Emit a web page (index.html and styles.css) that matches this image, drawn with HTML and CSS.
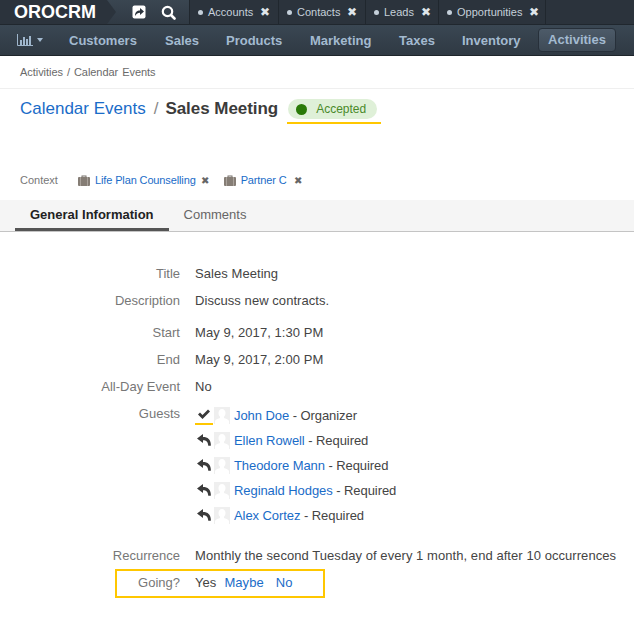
FILE: index.html
```html
<!DOCTYPE html>
<html lang="en">
<head>
    <meta charset="UTF-8">
    <title>Sales Meeting - Calendar Events</title>
    <link rel="stylesheet" href="styles.css">
</head>
<body>
    <svg class="icon-defs" width="0" height="0">
        <symbol id="icon-avatar" viewBox="0 0 16 17">
            <rect width="16" height="17" fill="#efefef"/>
            <path d="M8 2C10.200 2 11.500 3.800 11.500 6C11.500 7.800 10.800 9 10 9.800V11C11.500 11.800 14 12 15 14V17H1V14C2 12 4.500 11.800 6 11V9.800C5.200 9 4.500 7.800 4.500 6C4.500 3.800 5.800 2 8 2Z" fill="#fff"/>
        </symbol>
        <symbol id="icon-reply" viewBox="0 0 14 12">
            <path d="M6 0 L0 4.500 L6 9 V6.200 C9.300 6.200 11 7.800 11.300 11.800 L13.800 11.800 C14.200 6 11 3 6 3Z" fill="#3a3a3a"/>
        </symbol>
        <symbol id="icon-bag" viewBox="0 0 12 11">
            <path d="M3.500 2.500V0.500h5V2.500h-1V1.500h-3V2.500z" fill="#77716b"/>
            <rect y="2" width="12" height="9" rx="1" fill="#857d75"/>
            <path d="M2.500 2v9M9.500 2v9" stroke="#aaa39c"/>
        </symbol>
    </svg>

    <header class="app-header">
        <div class="top-bar">
            <div class="logo">OROCRM</div>
            <div class="quick-tools">
                <svg class="tool-icon" width="14" height="14" viewBox="0 0 14 14">
                    <rect width="13" height="13" x="0.500" y="0.500" rx="2" fill="#fff"/>
                    <path d="M3 11 C3 7 5 5.500 8 5.500 V3 L12 6.500 L8 10 V7.700 C6 7.700 4.500 8.500 3 11Z" fill="#2b343d"/>
                </svg>
                <svg class="tool-icon" width="15" height="15" viewBox="0 0 15 15">
                    <circle cx="6.500" cy="6.500" r="4.700" fill="none" stroke="#fff" stroke-width="2.200"/>
                    <path d="M10 10 L13.500 13.500" stroke="#fff" stroke-width="2.600" stroke-linecap="round"/>
                </svg>
            </div>
            <ul class="pins">
                <li class="pin pin-accounts"><span class="pin-dot"></span>Accounts<span class="pin-x">&#10006;</span></li>
                <li class="pin pin-contacts"><span class="pin-dot"></span>Contacts<span class="pin-x">&#10006;</span></li>
                <li class="pin pin-leads"><span class="pin-dot"></span>Leads<span class="pin-x">&#10006;</span></li>
                <li class="pin pin-opps"><span class="pin-dot"></span>Opportunities<span class="pin-x">&#10006;</span></li>
            </ul>
        </div>
        <nav class="main-nav">
            <div class="nav-chart">
                <svg width="16" height="12" viewBox="0 0 16 12">
                    <path d="M0.500 0 V11.500 H16" fill="none" stroke="#9fb6cc"/>
                    <path d="M3 6h2v5H3zM6 3h2v8H6zM9 5h2v6H9zM12 2h2v9h-2z" fill="#9fb6cc"/>
                </svg>
                <span class="caret"></span>
            </div>
            <a class="nav-item nav-customers">Customers</a>
            <a class="nav-item nav-sales">Sales</a>
            <a class="nav-item nav-products">Products</a>
            <a class="nav-item nav-marketing">Marketing</a>
            <a class="nav-item nav-taxes">Taxes</a>
            <a class="nav-item nav-inventory">Inventory</a>
            <a class="nav-item nav-active">Activities</a>
        </nav>
    </header>

    <div class="breadcrumb">Activities / Calendar Events</div>

    <main class="page">
        <div class="title-row">
            <a class="title-link">Calendar Events</a>
            <span class="title-sep">/</span>
            <span class="title-name">Sales Meeting</span>
            <div class="status-wrap">
                <span class="status"><span class="status-dot"></span>Accepted</span>
            </div>
        </div>

        <div class="context">
            <span class="context-label">Context</span>
            <svg class="bag" width="12" height="11"><use href="#icon-bag"/></svg>
            <a class="context-link">Life Plan Counselling</a>
            <span class="context-x">&#10006;</span>
            <svg class="bag bag-second" width="12" height="11"><use href="#icon-bag"/></svg>
            <a class="context-link">Partner C</a>
            <span class="context-x">&#10006;</span>
        </div>

        <div class="tabs">
            <a class="tab tab-active">General Information</a>
            <a class="tab">Comments</a>
        </div>

        <dl class="details">
            <div class="row row-title"><dt>Title</dt><dd>Sales Meeting</dd></div>
            <div class="row row-desc"><dt>Description</dt><dd>Discuss new contracts.</dd></div>
            <div class="row row-start"><dt>Start</dt><dd>May 9, 2017, 1:30 PM</dd></div>
            <div class="row row-end"><dt>End</dt><dd>May 9, 2017, 2:00 PM</dd></div>
            <div class="row row-allday"><dt>All-Day Event</dt><dd>No</dd></div>
            <div class="row row-guests">
                <dt>Guests</dt>
                <dd>
                    <ul class="guests">
                        <li class="guest">
                            <span class="guest-status guest-organizer">
                                <svg width="14" height="12" viewBox="0 0 14 12"><path d="M1 6.500 L3 4.500 L5.500 7 L11 1.500 L13 3.500 L5.500 11Z" fill="#3a3a3a"/></svg>
                            </span>
                            <svg class="avatar" width="16" height="17"><use href="#icon-avatar"/></svg>
                            <span><a>John Doe</a> - Organizer</span>
                        </li>
                        <li class="guest">
                            <span class="guest-status"><svg width="14" height="12"><use href="#icon-reply"/></svg></span>
                            <svg class="avatar" width="16" height="17"><use href="#icon-avatar"/></svg>
                            <span><a>Ellen Rowell</a> - Required</span>
                        </li>
                        <li class="guest">
                            <span class="guest-status"><svg width="14" height="12"><use href="#icon-reply"/></svg></span>
                            <svg class="avatar" width="16" height="17"><use href="#icon-avatar"/></svg>
                            <span><a>Theodore Mann</a> - Required</span>
                        </li>
                        <li class="guest">
                            <span class="guest-status"><svg width="14" height="12"><use href="#icon-reply"/></svg></span>
                            <svg class="avatar" width="16" height="17"><use href="#icon-avatar"/></svg>
                            <span><a>Reginald Hodges</a> - Required</span>
                        </li>
                        <li class="guest">
                            <span class="guest-status"><svg width="14" height="12"><use href="#icon-reply"/></svg></span>
                            <svg class="avatar" width="16" height="17"><use href="#icon-avatar"/></svg>
                            <span><a>Alex Cortez</a> - Required</span>
                        </li>
                    </ul>
                </dd>
            </div>
            <div class="row row-recurrence"><dt>Recurrence</dt><dd>Monthly the second Tuesday of every 1 month, end after 10 occurrences</dd></div>
            <div class="row row-going">
                <dt>Going?</dt>
                <dd class="going"><span>Yes</span><a>Maybe</a><a>No</a></dd>
            </div>
        </dl>
    </main>
</body>
</html>
```

FILE: styles.css
```css
* {
    box-sizing: border-box;
}
body {
    font-family: "Liberation Sans", Arial, sans-serif;
    font-size: 14px;
    margin: 0;
    padding: 0;
    background-color: #fff;
    color: #444;
    overflow: hidden;
}
a {
    color: #1a6cc8;
}
.icon-defs {
    display: block;
    height: 0;
}

/* header */
.app-header {
    height: 56px;
    background-color: #2c353e;
}
.top-bar {
    display: flex;
    height: 25px;
    background-color: #2b333c;
    border-bottom: 1px solid #20272e;
}
.logo {
    width: 107px;
    padding-left: 14px;
    color: #fff;
    font-size: 18px;
    font-weight: bold;
    line-height: 24px;
    position: relative;
}
/* arrow of the logo block, lies over the tools block */
.logo::after {
    content: "";
    position: absolute;
    left: 107px;
    top: 0;
    border-left: 9px solid #2b333c;
    border-top: 12px solid transparent;
    border-bottom: 12px solid transparent;
}
.quick-tools {
    width: 82px;
    height: 24px;
    display: flex;
    align-items: center;
    gap: 15px;
    padding-left: 25px;
    background: linear-gradient(#3a4651, #303a44);
}
.pins {
    display: flex;
    list-style: none;
    margin: 0;
    padding: 0;
    font-size: 11px;
    color: #c5d0da;
}
.pin {
    display: flex;
    align-items: center;
    height: 24px;
    padding-left: 8px;
    border-left: 1px solid #20272e;
}
.pin-accounts {
    width: 89px;
}
.pin-contacts {
    width: 87px;
}
.pin-leads {
    width: 73px;
}
.pin-opps {
    width: 108px;
    border-right: 1px solid #20272e;
}
.pin-dot {
    width: 5px;
    height: 5px;
    border-radius: 50%;
    background-color: #c5d0da;
    margin-right: 5px;
}
.pin-x {
    margin-left: 7px;
    font-size: 12px;
    color: #dfe5ea;
}
.main-nav {
    display: flex;
    align-items: center;
    height: 31px;
    background: linear-gradient(#3a4753, #2f3943);
    border-bottom: 1px solid #1e252b;
    padding-left: 17px;
    font-size: 13px;
    font-weight: bold;
    color: #a3bad0;
}
.nav-chart {
    display: flex;
    align-items: center;
    width: 52px;
}
.caret {
    width: 0;
    height: 0;
    margin-left: 4px;
    border-left: 3.500px solid transparent;
    border-right: 3.500px solid transparent;
    border-top: 4px solid #a3bad0;
}
.nav-item {
    color: #a3bad0;
}
.nav-customers {
    width: 96px;
}
.nav-sales {
    width: 61px;
}
.nav-products {
    width: 84px;
}
.nav-marketing {
    width: 89px;
}
.nav-taxes {
    width: 63px;
}
.nav-inventory {
    width: 76px;
}
.nav-active {
    width: 78px;
    height: 24px;
    line-height: 22px;
    text-align: center;
    background: linear-gradient(#4d5b69, #3e4a56);
    border: 1px solid #27303a;
    border-radius: 4px;
}

/* breadcrumb and title */
.breadcrumb {
    height: 33px;
    padding: 10px 20px 0;
    border-bottom: 1px solid #efefef;
    font-size: 11px;
    word-spacing: 1px;
    letter-spacing: -0.050px;
    color: #6a6a6a;
}
.title-row {
    display: flex;
    height: 37px;
    padding: 9px 0 0 20px;
    align-items: flex-start;
}
.title-link {
    font-size: 17px;
    line-height: 21px;
}
.title-sep {
    margin: 0 7px 0 8px;
    font-size: 17px;
    line-height: 21px;
    color: #888;
}
.title-name {
    font-size: 17px;
    font-weight: bold;
    line-height: 21px;
    letter-spacing: -0.050px;
    color: #3b3b3b;
}
.status-wrap {
    width: 94px;
    height: 26px;
    margin-left: 9px;
    border-bottom: 2px solid #ffc700;
}
.status {
    display: flex;
    align-items: center;
    width: 89px;
    height: 20px;
    margin: 1px 0 0 1px;
    padding-left: 8px;
    border-radius: 10px;
    background-color: #dff0d8;
    font-size: 12px;
    color: #4a8a2a;
}
.status-dot {
    width: 11px;
    height: 11px;
    margin-right: 9px;
    border-radius: 50%;
    background-color: #2a7a08;
}

/* context */
.context {
    display: flex;
    align-items: center;
    height: 20px;
    margin-top: 44px;
    padding-left: 20px;
    font-size: 11px;
}
.context-label {
    width: 58px;
    color: #777;
}
.bag {
    margin-right: 5px;
}
.bag-second {
    margin-left: 15px;
}
.context-link {
    letter-spacing: -0.130px;
}
.context-x {
    margin-left: 5px;
    font-size: 10px;
    color: #666;
}
.context-x:last-child {
    margin-left: 7px;
}

/* tabs */
.tabs {
    display: flex;
    height: 32px;
    margin-top: 10px;
    padding-left: 15px;
    background-color: #f5f5f5;
    border-bottom: 1px solid #c4c4c4;
    font-size: 13px;
}
.tab {
    height: 31px;
    padding: 7px 15px 0;
    color: #666;
}
.tab-active {
    border-bottom: 3px solid #555;
    font-weight: bold;
    color: #222;
}

/* details */
.details {
    margin: 0;
    padding-top: 33px;
}
.row {
    display: flex;
    line-height: 17px;
    margin-bottom: 10px;
}
.row-desc {
    margin-bottom: 15px;
}
.row-recurrence {
    margin-top: 19px;
    margin-bottom: 5px;
}
dt {
    width: 180px;
    flex-shrink: 0;
    text-align: right;
    font-size: 13px;
    font-weight: normal;
    color: #777;
}
dd {
    margin: 0 0 0 15px;
    font-size: 13px;
    letter-spacing: 0.060px;
    color: #444;
}
.guests {
    list-style: none;
    margin: -2px 0 0;
    padding: 0;
    letter-spacing: -0.070px;
}
.guest {
    display: flex;
    align-items: center;
    height: 25px;
}
.guest-status {
    display: flex;
    justify-content: center;
    width: 18px;
    margin-right: 1px;
    padding-bottom: 3px;
    margin-top: 1px;
}
.guest-organizer {
    border-bottom: 2px solid #ffc700;
}
.avatar {
    margin-right: 4px;
}
.row-going {
    width: 210px;
    height: 29px;
    margin-left: 115px;
    padding-bottom: 3px;
    border: 2px solid #ffc700;
    align-items: center;
}
.row-going dt {
    width: 63px;
}
.going {
    display: flex;
    gap: 8px;
}
.going a:last-child {
    margin-left: 4px;
}
```
